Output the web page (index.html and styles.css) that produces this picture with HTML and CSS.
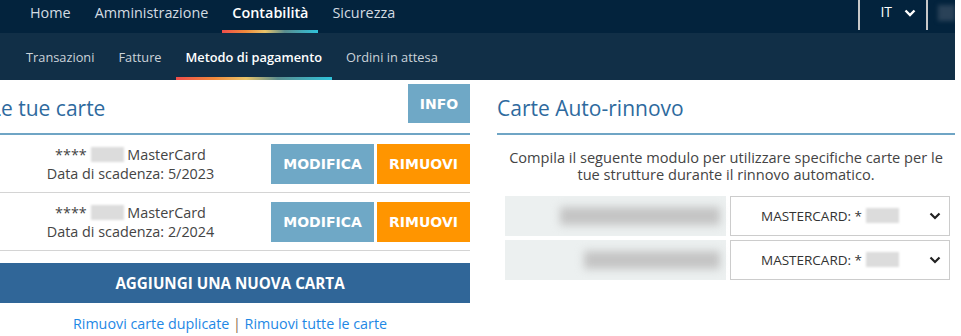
FILE: index.html
```html
<!DOCTYPE html>
<html lang="it">
<head>
  <meta charset="UTF-8">
  <meta name="viewport" content="width=device-width, initial-scale=1.0">
  <title>Metodo di pagamento</title>
  <link rel="stylesheet" href="styles.css">
</head>
<body>
  <div class="page">
    <header class="topbar">
      <nav class="main-nav">
        <a href="#">Home</a>
        <a href="#">Amministrazione</a>
        <a href="#" class="active">Contabilità</a>
        <a href="#">Sicurezza</a>
      </nav>
      <div class="top-right">
        <div class="lang">
          <span>IT</span>
          <svg width="12" height="8" viewBox="0 0 12 8"><path d="M1.5 1.5 L6 6 L10.5 1.5" fill="none" stroke="#fff" stroke-width="2.4"/></svg>
        </div>
        <div class="avatar"></div>
      </div>
    </header>

    <nav class="subbar">
      <a href="#">Transazioni</a>
      <a href="#">Fatture</a>
      <a href="#" class="active">Metodo di pagamento</a>
      <a href="#">Ordini in attesa</a>
    </nav>

    <main class="content">
      <section class="cards-panel">
        <div class="panel-head">
          <h2>Le tue carte</h2>
          <button class="btn btn-info">INFO</button>
        </div>

        <div class="card-row">
          <div class="card-info">
            <div>**** <span class="blur blur-num"></span> MasterCard</div>
            <div>Data di scadenza: 5/2023</div>
          </div>
          <div class="card-actions">
            <button class="btn btn-edit">MODIFICA</button>
            <button class="btn btn-remove">RIMUOVI</button>
          </div>
        </div>

        <div class="card-row">
          <div class="card-info">
            <div>**** <span class="blur blur-num"></span> MasterCard</div>
            <div>Data di scadenza: 2/2024</div>
          </div>
          <div class="card-actions">
            <button class="btn btn-edit">MODIFICA</button>
            <button class="btn btn-remove">RIMUOVI</button>
          </div>
        </div>

        <button class="btn btn-add">AGGIUNGI UNA NUOVA CARTA</button>

        <p class="links">
          <a href="#">Rimuovi carte duplicate</a> | <a href="#">Rimuovi tutte le carte</a>
        </p>
      </section>

      <section class="renew-panel">
        <div class="panel-head">
          <h2>Carte Auto-rinnovo</h2>
        </div>
        <p class="renew-text">Compila il seguente modulo per utilizzare specifiche carte per le tue strutture durante il rinnovo automatico.</p>

        <div class="renew-list">
          <div class="renew-row">
            <div class="facility"><span class="blur blur-name"></span></div>
            <div class="select">
              <span>MASTERCARD: * <span class="blur blur-num"></span></span>
              <svg width="12" height="8" viewBox="0 0 12 8"><path d="M1.5 1.5 L6 6 L10.5 1.5" fill="none" stroke="#222" stroke-width="2.2"/></svg>
            </div>
          </div>
          <div class="renew-row">
            <div class="facility"><span class="blur blur-name short"></span></div>
            <div class="select">
              <span>MASTERCARD: * <span class="blur blur-num"></span></span>
              <svg width="12" height="8" viewBox="0 0 12 8"><path d="M1.5 1.5 L6 6 L10.5 1.5" fill="none" stroke="#222" stroke-width="2.2"/></svg>
            </div>
          </div>
        </div>
      </section>
    </main>
  </div>
</body>
</html>
```

FILE: styles.css
```css
body {
  margin: 0;
  font-family: "Open Sans", "Noto Sans", sans-serif;
  background-color: #fff;
  color: #444;
}

.page {
  width: 955px;
  overflow: hidden;
}

a {
  text-decoration: none;
}

/* top bar */
.topbar {
  display: flex;
  justify-content: space-between;
  height: 33px;
  background-color: #03233d;
}

.main-nav {
  display: flex;
  gap: 4px;
  padding-left: 20px;
}

.main-nav a {
  padding: 0 10px;
  height: 30px;
  line-height: 25px;
  font-size: 14.4px;
  color: #d3dbe2;
  border-bottom: 3px solid transparent;
}

.main-nav a.active,
.subbar a.active {
  color: #fff;
  font-weight: 600;
  border-image: linear-gradient(to right, #ef4b4b, #f08a3c 25%, #e9c46a 45%, #5a8d8f 65%, #2ec4dd) 1;
}

.top-right {
  display: flex;
  align-items: flex-start;
}

.lang {
  display: flex;
  align-items: flex-start;
  gap: 12px;
  height: 30px;
  padding: 0 10px 0 20px;
  border-left: 2px solid #c8c8c8;
  border-right: 2px solid #c8c8c8;
  color: #fff;
  font-size: 14px;
  line-height: 24px;
}

.lang svg {
  margin-top: 9px;
}

.avatar {
  width: 17px;
  height: 16px;
  margin: 5px 0 0 10px;
  background-color: #2a4258;
  filter: blur(2px);
}

/* sub nav */
.subbar {
  display: flex;
  gap: 4px;
  height: 47px;
  padding-left: 16px;
  background-color: #112f47;
}

.subbar a {
  padding: 0 10px;
  height: 44px;
  line-height: 48px;
  font-size: 12.8px;
  color: #cbd3da;
  border-bottom: 3px solid transparent;
}

/* content */
.content {
  display: flex;
  gap: 27px;
  margin-left: -10px;
}

.cards-panel {
  width: 480px;
  flex-shrink: 0;
}

.renew-panel {
  flex: 1;
}

.panel-head {
  display: flex;
  justify-content: space-between;
  align-items: center;
  height: 51px;
  padding-top: 2px;
  border-bottom: 2px solid #6fa5c5;
}

.panel-head h2 {
  margin: 0;
  font-size: 21px;
  font-weight: 400;
  color: #2e6a9e;
}

.btn {
  border: none;
  color: #fff;
  font-family: "DejaVu Sans", sans-serif;
  font-weight: bold;
  font-size: 14px;
  cursor: pointer;
}

.btn-info {
  width: 62px;
  height: 39px;
  margin-top: -8px;
  background-color: #6fa8c6;
}

.card-row {
  display: flex;
  align-items: center;
  height: 57px;
  border-bottom: 1px solid #d4d4d4;
}

.card-info {
  flex: 1;
  text-align: center;
  font-size: 14.4px;
  line-height: 19px;
  padding-top: 1px;
}

.blur {
  display: inline-block;
  vertical-align: middle;
  background-color: #dcdcdc;
  filter: blur(1px);
}

.blur-num {
  width: 33px;
  height: 15px;
  margin-top: -3px;
}

.card-actions {
  display: flex;
  gap: 3px;
}

.btn-edit {
  width: 103px;
  height: 40px;
  background-color: #6fa8c6;
}

.btn-remove {
  width: 93px;
  height: 40px;
  background-color: #ff9500;
}

.btn-add {
  display: block;
  width: 480px;
  height: 40px;
  margin-top: 12px;
  background-color: #306698;
  font-family: "Open Sans", sans-serif;
  font-size: 15.2px;
}

.links {
  margin: 11px 0 0;
  text-align: center;
  font-size: 14.3px;
  color: #8a6a4a;
}

.links a {
  color: #1e88e5;
}

.renew-text {
  margin: 14px 0 0;
  padding: 0 12px;
  text-align: center;
  font-size: 14.6px;
  line-height: 17px;
}

.renew-list {
  display: flex;
  flex-direction: column;
  gap: 4px;
  margin: 13px 5px 0 8px;
}

.renew-row {
  display: flex;
  gap: 4px;
  height: 40px;
}

.facility {
  box-sizing: border-box;
  width: 221px;
  display: flex;
  justify-content: flex-end;
  align-items: center;
  padding-right: 6px;
  background-color: #ecf0f0;
}

.blur-name {
  width: 160px;
  height: 18px;
  background-color: #c4c4c4;
  filter: blur(4px);
}

.blur-name.short {
  width: 136px;
}

.select {
  flex: 1;
  display: flex;
  justify-content: space-between;
  align-items: center;
  padding: 0 8px 0 30px;
  border: 1px solid #ccc;
  font-size: 13.5px;
  color: #333;
}
```
